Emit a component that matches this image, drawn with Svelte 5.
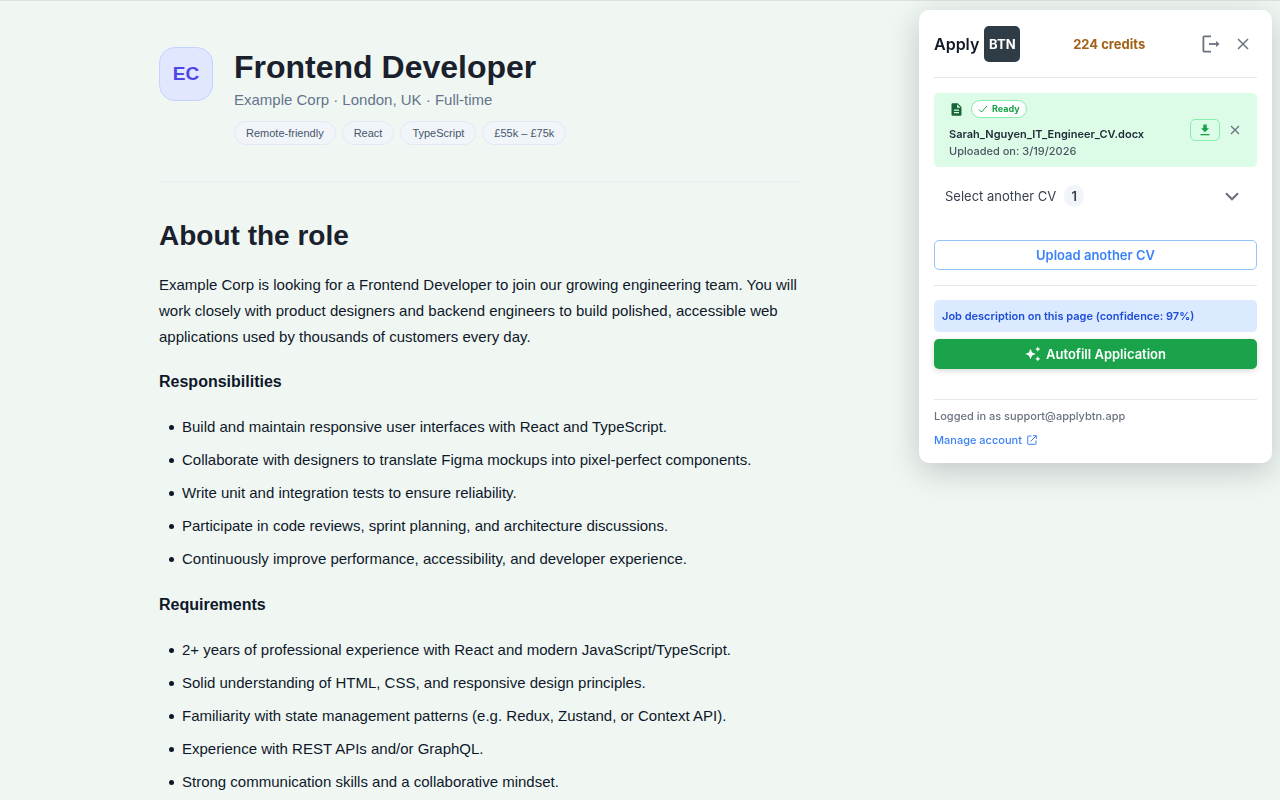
<script>
    const tags = ["Remote-friendly", "React", "TypeScript", "£55k – £75k"];

    const sections = [
        {
            id: "responsibilities",
            title: "Responsibilities",
            items: [
                "Build and maintain responsive user interfaces with React and TypeScript.",
                "Collaborate with designers to translate Figma mockups into pixel-perfect components.",
                "Write unit and integration tests to ensure reliability.",
                "Participate in code reviews, sprint planning, and architecture discussions.",
                "Continuously improve performance, accessibility, and developer experience.",
            ],
        },
        {
            id: "requirements",
            title: "Requirements",
            items: [
                "2+ years of professional experience with React and modern JavaScript/TypeScript.",
                "Solid understanding of HTML, CSS, and responsive design principles.",
                "Familiarity with state management patterns (e.g. Redux, Zustand, or Context API).",
                "Experience with REST APIs and/or GraphQL.",
                "Strong communication skills and a collaborative mindset.",
            ],
        },
    ];

    let panelOpen = true;
    let listOpen = false;
</script>

<main class="page">
    <article class="job">
        <header class="job-header">
            <div class="logo">EC</div>
            <div>
                <h1>Frontend Developer</h1>
                <p class="meta">Example Corp · London, UK · Full-time</p>
                <ul class="tags">
                    {#each tags as tag}
                        <li>{tag}</li>
                    {/each}
                </ul>
            </div>
        </header>

        <h2>About the role</h2>
        <p class="about">
            Example Corp is looking for a Frontend Developer to join our growing engineering team. You will
            work closely with product designers and backend engineers to build polished, accessible web
            applications used by thousands of customers every day.
        </p>

        {#each sections as section (section.id)}
            <h3>{section.title}</h3>
            <ul class="points">
                {#each section.items as item}
                    <li>{item}</li>
                {/each}
            </ul>
        {/each}
    </article>
</main>

{#if panelOpen}
    <aside class="panel" aria-label="ApplyBTN">
        <header class="panel-header">
            <div class="brand">Apply <span class="brand-box">BTN</span></div>
            <div class="credits">224 credits</div>
            <div class="actions">
                <button class="icon-button" aria-label="Log out">
                    <svg width="18" height="18" viewBox="0 0 18 18" fill="none" stroke="currentColor" stroke-width="1.8">
                        <path d="M9 1.400H2.200a.8.8 0 0 0-.8.8v13.600a.8.8 0 0 0 .8.8H9" />
                        <path d="M7 9h9" />
                        <path d="M14 6l3.600 3-3.600 3z" fill="currentColor" stroke="none" />
                    </svg>
                </button>
                <button class="icon-button" aria-label="Close" on:click={() => (panelOpen = false)}>
                    <svg width="12" height="12" viewBox="0 0 12 12" fill="none" stroke="currentColor" stroke-width="1.5">
                        <path d="M1 1l10 10M11 1L1 11" />
                    </svg>
                </button>
            </div>
        </header>

        <section class="cv">
            <div class="cv-info">
                <div class="cv-status">
                    <svg width="15" height="15" viewBox="0 0 24 24" fill="#166534">
                        <path d="M14 2H6c-1.1 0-2 .9-2 2v16c0 1.1.9 2 2 2h12c1.1 0 2-.9 2-2V8l-6-6zm2 16H8v-2h8v2zm0-4H8v-2h8v2zm-3-5V3.500L18.500 9H13z" />
                    </svg>
                    <span class="ready">
                        <svg width="10" height="10" viewBox="0 0 10 10" fill="none" stroke="currentColor">
                            <path d="M1 5.500l2.500 2.500L9 2" />
                        </svg>
                        Ready
                    </span>
                </div>
                <div class="cv-name">Sarah_Nguyen_IT_Engineer_CV.docx</div>
                <div class="cv-date">Uploaded on: 3/19/2026</div>
            </div>
            <button class="download" aria-label="Download CV">
                <svg width="10" height="12" viewBox="0 0 10 12" fill="currentColor">
                    <path d="M3.300.5h3.400v3.700h2.300L5 8.300 1 4.200h2.300z" />
                    <path d="M.5 10h9v1.300h-9z" />
                </svg>
            </button>
            <button class="icon-button" aria-label="Remove CV">
                <svg width="10" height="10" viewBox="0 0 10 10" fill="none" stroke="currentColor" stroke-width="1.3">
                    <path d="M1 1l8 8M9 1L1 9" />
                </svg>
            </button>
        </section>

        <button class="select-cv" aria-expanded={listOpen} on:click={() => (listOpen = !listOpen)}>
            Select another CV
            <span class="count">1</span>
            <svg class="chevron" width="14" height="9" viewBox="0 0 14 9" fill="none" stroke="currentColor" stroke-width="2.2">
                <path d="M1 1.200l6 6 6-6" />
            </svg>
        </button>

        <button class="upload">Upload another CV</button>

        <section class="autofill">
            <p class="detected">Job description on this page (confidence: 97%)</p>
            <button class="fill">
                <svg width="16" height="16" viewBox="0 0 16 16" fill="currentColor">
                    <path d="M5.500 2.800l1.600 3.600 3.600 1.600-3.600 1.600-1.600 3.600-1.600-3.600L.3 8l3.600-1.600z" />
                    <path d="M12.800.5l.8 1.800 1.800.8-1.800.8-.8 1.800-.8-1.800-1.800-.8 1.800-.8z" />
                    <path d="M12.800 10.300l.8 1.800 1.800.8-1.800.8-.8 1.800-.8-1.800-1.800-.8 1.800-.8z" />
                </svg>
                Autofill Application
            </button>
        </section>

        <footer class="panel-footer">
            <p>Logged in as support@applybtn.app</p>
            <a href="#account">
                Manage account
                <svg width="10" height="10" viewBox="0 0 10 10" fill="none" stroke="currentColor">
                    <path d="M4.500 1H1.200a.5.5 0 0 0-.5.5v7.300a.5.5 0 0 0 .5.5h7.300a.5.5 0 0 0 .5-.5V5.500" />
                    <path d="M6 .7h3.300V4M9.300.7L3.500 6.500" />
                </svg>
            </a>
        </footer>
    </aside>
{/if}

<style>
    :global(body) {
        background: #f0f7f3;
    }

    .page {
        border-top: 1px solid #dde1df;
        padding: 46px 24px 24px 159px;
        font-family: "Liberation Sans", Arial, sans-serif;
        color: #0f172a;
    }

    .job {
        max-width: 640px;
    }

    .job-header {
        display: flex;
        gap: 21px;
        padding-bottom: 36px;
        border-bottom: 1px solid #e6eef0;
    }

    .logo {
        display: flex;
        align-items: center;
        justify-content: center;
        box-sizing: border-box;
        width: 54px;
        height: 54px;
        border: 1px solid #c7d2fe;
        border-radius: 16px;
        background: #e0e7ff;
        color: #4f46e5;
        font-size: 19px;
        font-weight: bold;
    }

    h1 {
        margin: 0;
        font-size: 32px;
        line-height: 40px;
        color: #1a202c;
    }

    .meta {
        margin: 3px 0 11px;
        font-size: 15px;
        line-height: 20px;
        color: #64748b;
    }

    .tags {
        display: flex;
        flex-wrap: wrap;
        gap: 6px;
        margin: 0;
        padding: 0;
        list-style: none;
    }

    .tags li {
        padding: 0 11px;
        border: 1px solid #e2e8f5;
        border-radius: 12px;
        background: #f1f5f9;
        color: #475569;
        font-size: 11px;
        line-height: 22px;
    }

    h2 {
        margin: 37px 0 19px;
        font-size: 28px;
        line-height: 34px;
        color: #1a202c;
    }

    h3 {
        margin: 20px 0;
        font-size: 16px;
        line-height: 24px;
    }

    .about {
        margin: 0;
        font-size: 15px;
        line-height: 26px;
    }

    .points {
        display: flex;
        flex-direction: column;
        gap: 7px;
        margin: 0 0 21px;
        padding-left: 10px;
        font-size: 15px;
        line-height: 26px;
        list-style: none;
    }

    .points li {
        display: flex;
        align-items: center;
        gap: 8px;
    }

    .points li::before {
        content: "";
        width: 5px;
        height: 5px;
        border-radius: 50%;
        background: currentColor;
    }

    .panel {
        position: fixed;
        top: 10px;
        right: 8px;
        box-sizing: border-box;
        width: 353px;
        padding: 16px 15px 15px;
        border-radius: 10px;
        background: #fff;
        box-shadow: 0 8px 32px rgba(0, 0, 0, 0.2);
        color: #1f2937;
        font-family: Inter, sans-serif;
        font-size: 11px;
        line-height: 16px;
    }

    .panel button {
        font-family: inherit;
        cursor: pointer;
    }

    .panel-header {
        display: flex;
        align-items: center;
        justify-content: space-between;
        padding-bottom: 15px;
        border-bottom: 1px solid #e5e7eb;
    }

    .brand {
        display: flex;
        align-items: center;
        gap: 5px;
        color: #111827;
        font-size: 16px;
        font-weight: 600;
    }

    .brand-box {
        width: 36px;
        border-radius: 5px;
        background: #2f3b45;
        color: #fff;
        font-size: 13px;
        font-weight: 700;
        line-height: 36px;
        text-align: center;
    }

    .credits {
        color: #a16118;
        font-size: 13px;
        font-weight: 700;
    }

    .actions {
        display: flex;
        align-items: center;
        gap: 9px;
        padding-right: 4px;
    }

    .icon-button {
        display: flex;
        padding: 4px;
        border: 0;
        background: none;
        color: #6b7280;
    }

    .cv {
        display: flex;
        align-items: center;
        gap: 6px;
        margin-top: 15px;
        padding: 7px 13px 7px 15px;
        border-radius: 5px;
        background: #dcfce7;
        line-height: 17px;
    }

    .cv-info {
        flex: 1;
    }

    .cv-status {
        display: flex;
        align-items: center;
        gap: 7px;
        margin-bottom: 8px;
    }

    .ready {
        display: flex;
        align-items: center;
        gap: 4px;
        padding: 0 6px;
        border: 1px solid #86efac;
        border-radius: 10px;
        background: #fff;
        color: #16a34a;
        font-size: 9px;
        font-weight: 700;
        line-height: 16px;
    }

    .cv-name {
        font-weight: 600;
    }

    .cv-date {
        color: #4b5563;
        font-weight: 500;
    }

    .download {
        display: flex;
        align-items: center;
        justify-content: center;
        width: 30px;
        height: 22px;
        border: 1px solid #86efac;
        border-radius: 5px;
        background: none;
        color: #16a34a;
    }

    .select-cv {
        display: flex;
        align-items: center;
        gap: 8px;
        width: 100%;
        margin-top: 14px;
        padding: 4px 18px 4px 11px;
        border: 0;
        background: none;
        color: #374151;
        font-size: 13px;
    }

    .count {
        width: 20px;
        border-radius: 11px;
        background: #f1f5f9;
        font-weight: 600;
        line-height: 22px;
    }

    .chevron {
        margin-left: auto;
        color: #6b7280;
    }

    .upload {
        width: 100%;
        height: 30px;
        margin-top: 29px;
        border: 1px solid #93c5fd;
        border-radius: 5px;
        background: #fff;
        color: #3b82f6;
        font-size: 13px;
        font-weight: 600;
    }

    .autofill {
        margin-top: 15px;
        padding-top: 14px;
        border-top: 1px solid #e5e7eb;
    }

    .detected {
        margin: 0 0 7px;
        padding: 8px;
        border-radius: 5px;
        background: #dbeafe;
        color: #1d4ed8;
        font-weight: 600;
    }

    .fill {
        display: flex;
        align-items: center;
        justify-content: center;
        gap: 5px;
        width: 100%;
        height: 30px;
        border: 0;
        border-radius: 5px;
        background: #1ba34b;
        box-shadow: 0 2px 6px rgba(0, 0, 0, 0.15);
        color: #fff;
        font-size: 13px;
        font-weight: 600;
    }

    .panel-footer {
        margin-top: 30px;
        padding-top: 8px;
        border-top: 1px solid #e5e7eb;
        color: #6b7280;
        font-weight: 500;
    }

    .panel-footer p {
        margin: 0 0 8px;
    }

    .panel-footer a {
        display: flex;
        align-items: center;
        gap: 5px;
        color: #3b82f6;
        text-decoration: none;
    }
</style>
